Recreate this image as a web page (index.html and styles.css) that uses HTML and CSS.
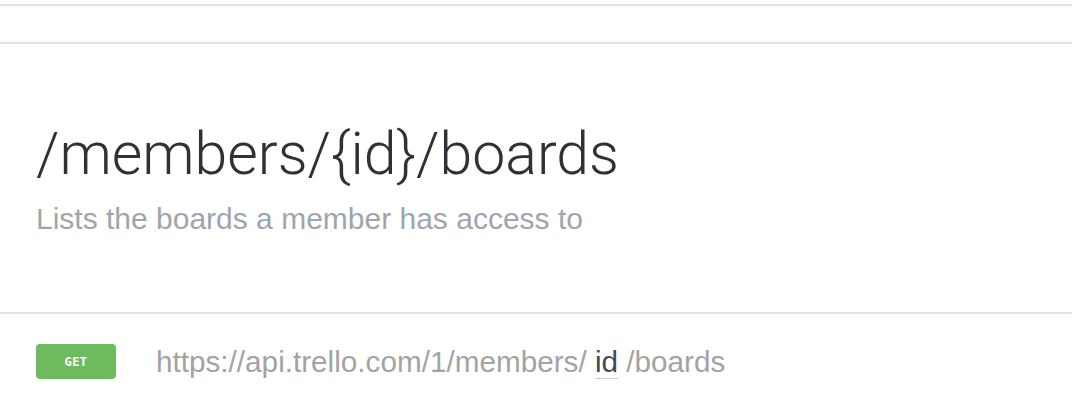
FILE: index.html
```html
<!DOCTYPE html>
<html>
<head>
<meta charset="utf-8">
<link rel="stylesheet" href="styles.css">
</head>
<body>
<div class="rule-top"></div>
<div class="rule-gap"></div>
<section class="intro">
  <h1 class="title">/members/{id}/boards</h1>
  <p class="subtitle">Lists the boards a member has access to</p>
</section>
<div class="endpoint">
  <span class="method">GET</span>
  <span class="url">https://api.trello.com/1/members/ <span class="param">id</span> /boards</span>
</div>
</body>
</html>
```
FILE: styles.css
```css
html, body {
  margin: 0;
  padding: 0;
  background: #ffffff;
}
body {
  font-family: "Liberation Sans", Arial, sans-serif;
}
.rule-top {
  height: 4px;
  border-bottom: 2px solid #e2e2e2;
}
.rule-gap {
  height: 36px;
  border-bottom: 2px solid #e2e2e2;
}
.intro {
  padding: 80px 36px 0;
  height: 188px;
  border-bottom: 2px solid #e2e2e2;
}
.title {
  margin: 0;
  font-family: Roboto, "Liberation Sans", sans-serif;
  font-weight: 300;
  font-size: 59px;
  line-height: 59px;
  color: #2f3136;
}
.subtitle {
  margin: 21px 0 0;
  font-size: 30px;
  line-height: 30px;
  color: #9ea5ae;
}
.endpoint {
  display: flex;
  align-items: center;
  gap: 40px;
  padding: 30px 36px 0;
}
.method {
  display: flex;
  align-items: center;
  justify-content: center;
  width: 80px;
  height: 35px;
  border-radius: 4px;
  background: #6cbb5e;
  color: #ffffff;
  font-family: "DejaVu Sans Mono", monospace;
  font-weight: bold;
  font-size: 12px;
  letter-spacing: 0.5px;
}
.url {
  font-size: 29.7px;
  line-height: 35px;
  color: #a3a3a3;
}
.param {
  color: #444a52;
  border-bottom: 2px solid #cfcfcf;
}
```
